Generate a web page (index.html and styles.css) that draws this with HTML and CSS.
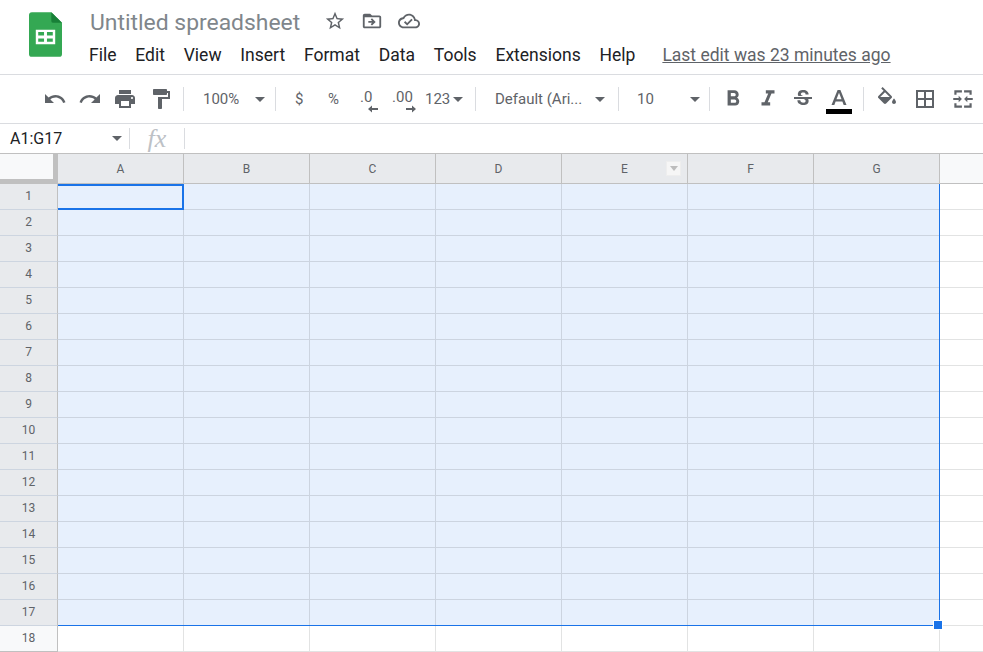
FILE: index.html
```html
<!DOCTYPE html>
<html lang="en">
<head>
<meta charset="utf-8">
<title>Untitled spreadsheet</title>
<link rel="stylesheet" href="styles.css">
</head>
<body>
<header class="appbar">
  <svg class="logo" viewBox="0 0 34 46" aria-hidden="true">
    <path d="M3 0H23L34 11V43a3 3 0 0 1-3 3H3a3 3 0 0 1-3-3V3a3 3 0 0 1 3-3z" fill="#34a853"/>
    <path d="M23 0L34 11H25a2 2 0 0 1-2-2z" fill="#188038"/>
    <path d="M7 18H27V33H7zM9.500 20.500V24H15.500V20.500zM18.500 20.500V24H24.500V20.500zM9.500 27V30.500H15.500V27zM18.500 27V30.500H24.500V27z" fill="#fff" fill-rule="evenodd"/>
  </svg>
  <div class="appbar-main">
    <div class="title-row">
      <span class="doc-title">Untitled spreadsheet</span>
      <div class="title-icons">
        <svg class="ico ico-title" viewBox="0 0 24 24"><path d="M22 9.240l-7.190-.620L12 2 9.190 8.630 2 9.240l5.460 4.730L5.820 21 12 17.270 18.180 21l-1.630-7.030L22 9.240zM12 15.400l-3.760 2.270 1-4.280-3.320-2.880 4.380-.380L12 6.100l1.710 4.040 4.380.380-3.320 2.880 1 4.280L12 15.400z"/></svg>
        <svg class="ico ico-title" viewBox="0 0 24 24"><path d="M20 6h-8l-2-2H4c-1.100 0-2 .9-2 2v12c0 1.100.9 2 2 2h16c1.100 0 2-.9 2-2V8c0-1.100-.9-2-2-2zm0 12H4V8h16v10zm-8.010-9l-1.410 1.410L12.160 12H8v2h4.160l-1.590 1.590L11.990 17 16 13.010 11.990 9z"/></svg>
        <svg class="ico ico-title" viewBox="0 0 24 24"><path d="M19.350 10.040C18.670 6.590 15.640 4 12 4 9.110 4 6.600 5.640 5.350 8.040 2.340 8.360 0 10.910 0 14c0 3.310 2.690 6 6 6h13c2.760 0 5-2.240 5-5 0-2.640-2.050-4.780-4.650-4.960zM19 18H6c-2.210 0-4-1.790-4-4 0-2.050 1.530-3.760 3.560-3.970l1.070-.110.5-.95C8.080 7.140 9.940 6 12 6c2.620 0 4.880 1.860 5.390 4.430l.3 1.500 1.530.11c1.560.1 2.780 1.410 2.780 2.960 0 1.650-1.350 3-3 3zm-9-3.820l-2.090-2.090L6.500 13.500 10 17l6.010-6.010-1.410-1.410z"/></svg>
      </div>
    </div>
    <nav class="menu">
      <span>File</span><span>Edit</span><span>View</span><span>Insert</span><span>Format</span><span>Data</span><span>Tools</span><span>Extensions</span><span>Help</span>
      <a class="last-edit">Last edit was 23 minutes ago</a>
    </nav>
  </div>
</header>

<div class="toolbar">
  <svg class="ico tb-undo" viewBox="0 0 24 24"><path d="M12.500 8c-2.650 0-5.050.99-6.900 2.600L2 7v9h9l-3.620-3.620c1.390-1.160 3.160-1.880 5.120-1.880 3.540 0 6.550 2.310 7.600 5.500l2.370-.78C21.080 11.030 17.150 8 12.500 8z"/></svg>
  <svg class="ico tb-redo" viewBox="0 0 24 24"><path d="M18.400 10.600C16.550 8.990 14.150 8 11.500 8c-4.650 0-8.580 3.030-9.960 7.220L3.900 16c1.050-3.190 4.050-5.500 7.600-5.500 1.950 0 3.730.72 5.120 1.880L13 16h9V7l-3.600 3.600z"/></svg>
  <svg class="ico tb-print" viewBox="0 0 24 24"><path d="M19 8H5c-1.660 0-3 1.340-3 3v6h4v4h12v-4h4v-6c0-1.660-1.340-3-3-3zm-3 11H8v-5h8v5zm3-7c-.55 0-1-.45-1-1s.45-1 1-1 1 .45 1 1-.45 1-1 1zm-1-9H6v4h12V3z"/></svg>
  <svg class="ico tb-paint" viewBox="0 0 24 24"><path d="M18 4V3c0-.55-.45-1-1-1H5c-.55 0-1 .45-1 1v4c0 .55.45 1 1 1h12c.55 0 1-.45 1-1V6h1v4H9v11c0 .55.45 1 1 1h2c.55 0 1-.45 1-1v-9h8V4h-3z"/></svg>
  <i class="sep sep-a"></i>
  <span class="tb-text zoom-val">100%</span><i class="caret caret-zoom"></i>
  <i class="sep sep-b"></i>
  <span class="tb-text dollar">$</span>
  <span class="tb-text percent">%</span>
  <span class="dec dec-less">.0<svg viewBox="0 0 10 8"><path d="M0 4L4 .5V3H10V5H4V7.500z"/></svg></span>
  <span class="dec dec-more">.00<svg viewBox="0 0 10 8"><path d="M10 4L6 .5V3H0V5H6V7.500z"/></svg></span>
  <span class="tb-text num123">123</span><i class="caret caret-123"></i>
  <i class="sep sep-c"></i>
  <span class="tb-text font-name">Default (Ari...</span><i class="caret caret-font"></i>
  <i class="sep sep-d"></i>
  <span class="tb-text font-size">10</span><i class="caret caret-size"></i>
  <i class="sep sep-e"></i>
  <svg class="ico tb-bold" viewBox="0 0 24 24"><path d="M15.600 10.790c.97-.67 1.650-1.770 1.650-2.790 0-2.260-1.750-4-4-4H7v14h7.040c2.090 0 3.710-1.700 3.710-3.790 0-1.520-.86-2.820-2.150-3.420zM10 6.500h3c.83 0 1.500.67 1.500 1.500s-.67 1.500-1.500 1.500h-3v-3zm3.500 9H10v-3h3.500c.83 0 1.500.67 1.500 1.500s-.67 1.500-1.500 1.500z"/></svg>
  <svg class="ico tb-italic" viewBox="0 0 24 24"><path d="M10 4v3h2.210l-3.420 8H6v3h8v-3h-2.210l3.420-8H18V4z"/></svg>
  <svg class="ico tb-strike" viewBox="0 0 24 24"><path d="M7.240 8.750c-.26-.48-.39-1.030-.39-1.670 0-.61.13-1.160.4-1.670.26-.5.63-.93 1.110-1.290.48-.35 1.050-.63 1.700-.83.66-.19 1.390-.29 2.180-.29.81 0 1.540.11 2.210.34.66.22 1.230.54 1.690.94.47.4.83.88 1.080 1.430.25.55.38 1.150.38 1.810h-3.010c0-.31-.05-.59-.15-.85-.09-.27-.24-.49-.44-.68-.2-.19-.45-.33-.75-.44-.3-.1-.66-.16-1.060-.16-.39 0-.74.04-1.030.13-.29.09-.53.21-.72.36-.19.16-.34.34-.44.55-.1.21-.15.43-.15.66 0 .48.25.88.74 1.210.38.25.77.48 1.410.7H7.390c-.05-.08-.11-.17-.15-.25zM21 12v-2H3v2h9.620c.18.07.4.14.55.2.37.17.66.34.87.51.21.17.35.36.43.57.07.2.11.43.11.69 0 .23-.05.45-.14.66-.09.2-.23.38-.42.53-.19.15-.42.26-.71.35-.29.08-.63.13-1.010.13-.43 0-.83-.04-1.180-.13s-.66-.23-.91-.42c-.25-.19-.45-.44-.59-.75-.14-.31-.25-.76-.25-1.210H6.400c0 .55.08 1.130.24 1.580.16.45.37.85.65 1.210.28.35.6.66.98.92.37.26.78.48 1.220.65.44.17.9.3 1.380.39.48.08.96.13 1.440.13.8 0 1.530-.09 2.180-.28s1.210-.45 1.670-.79c.46-.34.82-.77 1.070-1.270s.38-1.070.38-1.710c0-.6-.1-1.140-.31-1.610-.05-.11-.11-.23-.17-.33H21z"/></svg>
  <span class="text-color"><svg viewBox="0 0 24 16"><path d="M10.500 0h3L20 16h-3l-1.400-3.700H8.400L7 16H4zM9.300 9.800h5.400L12 2.800z" fill-rule="evenodd"/></svg><i class="color-bar"></i></span>
  <i class="sep sep-f"></i>
  <svg class="ico tb-fill" viewBox="0 0 24 24"><path d="M16.560 8.940L7.620 0 6.210 1.410l2.380 2.380-5.150 5.150c-.59.59-.59 1.540 0 2.120l5.500 5.500c.29.29.68.44 1.060.44s.77-.15 1.060-.44l5.500-5.500c.59-.58.59-1.530 0-2.120zM5.210 10L10 5.210 14.790 10H5.210zM19 11.500s-2 2.170-2 3.500c0 1.100.9 2 2 2s2-.9 2-2c0-1.330-2-3.500-2-3.500z"/></svg>
  <svg class="ico tb-borders" viewBox="0 0 24 24"><path d="M3 3v18h18V3H3zm8 16H5v-6h6v6zm0-8H5V5h6v6zm8 8h-6v-6h6v6zm0-8h-6V5h6v6z"/></svg>
  <svg class="ico tb-merge" viewBox="0 0 24 24"><path d="M4 4h7v2H6v2H4zM13 4h7v4h-2V6h-5zM4 16h2v2h5v2H4zM18 16h2v4h-7v-2h5zM3 11h5V9l3 3-3 3v-2H3zM21 11h-5V9l-3 3 3 3v-2h5z"/></svg>
</div>

<div class="formula-bar">
  <span class="name-box">A1:G17</span><i class="caret caret-name"></i>
  <i class="fx-sep"></i>
  <span class="fx">fx</span>
  <i class="fx-sep"></i>
</div>

<main class="sheet" id="sheet">
  <div class="corner"></div>
  <div class="col-h">A</div><div class="col-h">B</div><div class="col-h">C</div><div class="col-h">D</div>
  <div class="col-h col-e">E<span class="filter"><i></i></span></div>
  <div class="col-h">F</div><div class="col-h">G</div><div class="col-h col-rest"></div>
  <div class="selection"><span class="handle"></span></div>
  <div class="active-cell"></div>
</main>
<script src="sheet.js"></script>
</body>
</html>
```
FILE: sheet.js
```js
var sheet = document.getElementById('sheet');
for (var r = 1; r <= 18; r++) {
  var sel = r <= 17;
  var h = document.createElement('div');
  h.className = 'row-h' + (sel ? ' row-sel' : '');
  h.textContent = r;
  sheet.appendChild(h);
  for (var c = 0; c < 8; c++) {
    var d = document.createElement('div');
    d.className = 'cell' + (sel && c < 7 ? ' cell-sel' : '') + (c === 7 ? ' cell-last' : '');
    sheet.appendChild(d);
  }
}
```
FILE: styles.css
```css
* { box-sizing: border-box; }
html, body { margin: 0; padding: 0; height: 652px; overflow: hidden; background: #fff; }
body { font-family: Roboto, "Liberation Sans", sans-serif; color: #202124; }

.appbar { height: 75px; display: flex; border-bottom: 1px solid #dadce0; }
.logo { width: 33px; height: 45px; margin: 12px 0 0 29px; flex: none; }
.appbar-main { margin-left: 27px; display: flex; flex-direction: column; }
.title-row { display: flex; align-items: center; height: 28px; margin-top: 8px; }
.doc-title { font-size: 22.900px; color: #80868b; width: 234px; margin-left: 1px; white-space: nowrap; }
.title-icons { display: flex; gap: 15px; margin-bottom: 3px; }
.ico { fill: #5f6368; flex: none; display: block; }
.ico-title { width: 22px; height: 22px; }
.menu { display: flex; align-items: center; height: 22px; margin-top: 8px; font-size: 17.500px; gap: 18.800px; white-space: nowrap; }
.last-edit { color: #5f6368; text-decoration: underline; margin-left: 8.200px; }

.toolbar { height: 49px; display: flex; align-items: center; border-bottom: 1px solid #dadce0; padding-left: 43px; font-size: 15px; color: #5f6368; white-space: nowrap; }
.toolbar .ico { width: 24px; height: 24px; }
.tb-undo { margin-right: 11px; }
.tb-redo { margin-right: 11px; }
.tb-print { margin-right: 12px; }
.sep { width: 1px; height: 24px; background: #dadce0; flex: none; }
.sep-a { margin: 0 19px 0 10px; }
.caret { width: 0; height: 0; border: 5px solid transparent; border-top-color: #5f6368; border-bottom: 0; flex: none; display: block; }
.zoom-val { width: 52px; }
.caret-zoom { margin-right: 10px; }
.dollar { margin-left: 19px; width: 33px; }
.percent { width: 32px; }
.dec { position: relative; width: 32px; display: block; margin-bottom: 4px; }
.dec svg { position: absolute; width: 10px; height: 8px; fill: #5f6368; top: 17px; left: 8px; }
.dec-more { width: 33px; }
.dec-more svg { left: 14px; }
.num123 { width: 28px; }
.caret-123 { margin-right: 12px; }
.sep-c { margin-right: 19px; }
.font-name { width: 100px; }
.caret-font { margin-right: 13px; }
.sep-d { margin-right: 18px; }
.font-size { width: 53px; }
.caret-size { margin-right: 9px; }
.sep-e { margin-right: 10px; }
.toolbar .tb-bold, .toolbar .tb-italic { width: 26px; height: 26px; }
.tb-bold { margin-right: 9px; }
.tb-italic { margin-right: 10px; }
.tb-strike { margin-right: 11px; }
.text-color { width: 26px; display: flex; flex-direction: column; align-items: center; height: 25px; margin-top: 7px; gap: 4px; flex: none; }
.text-color svg { width: 24px; height: 15px; fill: #5f6368; display: block; flex: none; }
.color-bar { width: 26px; height: 5px; background: #000; display: block; flex: none; }
.sep-f { margin: 0 11px; }
.tb-fill { margin-right: 14px; }
.toolbar .tb-merge { width: 26px; height: 26px; margin-left: 13px; }

.formula-bar { height: 30px; display: flex; align-items: center; border-bottom: 1px solid #c0c0c0; font-size: 16px; }
.name-box { margin-left: 10px; width: 102px; }
.caret-name { margin-right: 7px; }
.fx-sep { width: 1px; height: 21px; background: #dadce0; flex: none; }
.fx { font-family: "Liberation Serif", serif; font-style: italic; font-size: 26px; color: #bdc1c6; width: 54px; text-align: center; line-height: 28px; }

.sheet { position: relative; display: grid; grid-template-columns: 58px repeat(7, 126px) 1fr; grid-template-rows: 30px repeat(18, 26px); font-size: 13px; color: #5f6368; }
.corner { background: #f8f9fa; border-right: 5px solid #c0c0c0; border-bottom: 5px solid #c0c0c0; }
.col-h { position: relative; background: #e8eaed; border-right: 1px solid #c0c0c0; border-bottom: 1px solid #c0c0c0; display: flex; align-items: center; justify-content: center; font-size: 12px; }
.col-rest { background: #f8f9fa; border-right: 0; }
.filter { position: absolute; right: 6px; top: 7px; width: 15px; height: 15px; background: #f6f6f6; border: 1px solid #eee; display: flex; align-items: center; justify-content: center; }
.filter i { width: 0; height: 0; border: 4px solid transparent; border-top: 5px solid #bdbdbd; border-bottom: 0; display: block; }
.row-h { background: #f8f9fa; border-right: 1px solid #c0c0c0; border-bottom: 1px solid #c0c0c0; display: flex; align-items: center; justify-content: center; font-size: 12px; padding-bottom: 2px; }
.row-sel { background: #e8eaed; border-bottom-color: #cdd5e0; }
.cell { border-right: 1px solid #e2e3e3; border-bottom: 1px solid #e2e3e3; }
.cell-sel { background: #e7f0fd; border-right-color: #ccd4e0; border-bottom-color: #ccd4e0; }
.cell-last { border-right: 0; }

.selection { position: absolute; left: 58px; top: 30px; width: 882px; height: 442px; border-right: 1px solid #1a73e8; border-bottom: 1px solid #1a73e8; pointer-events: none; }
.handle { position: absolute; right: -4px; bottom: -5px; background: #1a73e8; border: 1px solid #fff; box-sizing: content-box; width: 8px; height: 8px; }
.active-cell { position: absolute; left: 58px; top: 30px; width: 126px; height: 26px; border: 2px solid #1a73e8; border-left: 0; pointer-events: none; }
```
